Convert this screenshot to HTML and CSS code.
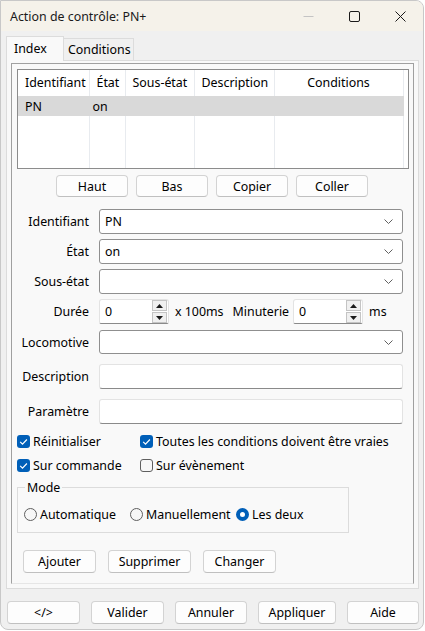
FILE: index.html
```html
<!DOCTYPE html>
<html lang="fr">
<head>
    <meta charset="UTF-8">
    <title>Action de contrôle: PN+</title>
    <link rel="stylesheet" href="styles.css">
</head>
<body>
    <div class="window">
        <!-- Title bar -->
        <div class="titlebar">
            <span class="title">Action de contrôle: PN+</span>
            <div class="caption">
                <div class="cap-btn">
                    <svg width="11" height="11" viewBox="0 0 11 11"><path d="M0.5 5.5h10" stroke="#c4c4c4" stroke-width="1"/></svg>
                </div>
                <div class="cap-btn">
                    <svg width="11" height="11" viewBox="0 0 11 11"><rect x="0.5" y="0.5" width="10" height="10" rx="1.5" fill="none" stroke="#1a1a1a" stroke-width="1"/></svg>
                </div>
                <div class="cap-btn">
                    <svg width="11" height="11" viewBox="0 0 11 11"><path d="M0.5 0.5l10 10M10.5 0.5l-10 10" stroke="#1a1a1a" stroke-width="1"/></svg>
                </div>
            </div>
        </div>

        <div class="client">
            <div class="tabs">
                <div class="tab active">Index</div>
                <div class="tab">Conditions</div>
            </div>

            <div class="panel">
                <div class="frame">
                    <!-- List of actions -->
                    <div class="listview">
                        <table>
                            <colgroup>
                                <col style="width:71px">
                                <col style="width:36px">
                                <col style="width:69px">
                                <col style="width:80px">
                                <col style="width:129px">
                                <col>
                            </colgroup>
                            <thead>
                                <tr>
                                    <th>Identifiant</th>
                                    <th>État</th>
                                    <th>Sous-état</th>
                                    <th>Description</th>
                                    <th class="center">Conditions</th>
                                    <th class="blank"></th>
                                </tr>
                            </thead>
                            <tbody>
                                <tr class="selected">
                                    <td class="first">PN</td>
                                    <td>on</td>
                                    <td></td>
                                    <td></td>
                                    <td></td>
                                    <td class="blank"></td>
                                </tr>
                                <tr class="filler">
                                    <td></td><td></td><td></td><td></td><td></td><td class="blank"></td>
                                </tr>
                            </tbody>
                        </table>
                    </div>

                    <div class="list-btns">
                        <button class="btn">Haut</button>
                        <button class="btn">Bas</button>
                        <button class="btn">Copier</button>
                        <button class="btn">Coller</button>
                    </div>

                    <!-- Fields -->
                    <div class="form">
                        <div class="row r-ident">
                            <label>Identifiant</label>
                            <div class="combo"><span>PN</span><svg class="chev" width="9" height="5" viewBox="0 0 9 5"><path d="M0.5 0.5l4 4 4-4" fill="none" stroke="#606060"/></svg></div>
                        </div>
                        <div class="row r-etat">
                            <label>État</label>
                            <div class="combo"><span>on</span><svg class="chev" width="9" height="5" viewBox="0 0 9 5"><path d="M0.5 0.5l4 4 4-4" fill="none" stroke="#606060"/></svg></div>
                        </div>
                        <div class="row r-sous">
                            <label>Sous-état</label>
                            <div class="combo"><span></span><svg class="chev" width="9" height="5" viewBox="0 0 9 5"><path d="M0.5 0.5l4 4 4-4" fill="none" stroke="#606060"/></svg></div>
                        </div>
                        <div class="row r-duree">
                            <label>Durée</label>
                            <div class="inline">
                                <div class="spin">
                                    <span class="spin-val">0</span>
                                    <div class="spin-btns">
                                        <div class="spin-btn"><svg width="7" height="4" viewBox="0 0 7 4"><path d="M0 4h7L3.5 0z" fill="#1a1a1a"/></svg></div>
                                        <div class="spin-btn"><svg width="7" height="4" viewBox="0 0 7 4"><path d="M0 0h7L3.5 4z" fill="#1a1a1a"/></svg></div>
                                    </div>
                                </div>
                                <span class="unit">x 100ms</span>
                                <span class="minut">Minuterie</span>
                                <div class="spin">
                                    <span class="spin-val">0</span>
                                    <div class="spin-btns">
                                        <div class="spin-btn"><svg width="7" height="4" viewBox="0 0 7 4"><path d="M0 4h7L3.5 0z" fill="#1a1a1a"/></svg></div>
                                        <div class="spin-btn"><svg width="7" height="4" viewBox="0 0 7 4"><path d="M0 0h7L3.5 4z" fill="#1a1a1a"/></svg></div>
                                    </div>
                                </div>
                                <span class="unit">ms</span>
                            </div>
                        </div>
                        <div class="row r-loco">
                            <label>Locomotive</label>
                            <div class="combo"><span></span><svg class="chev" width="9" height="5" viewBox="0 0 9 5"><path d="M0.5 0.5l4 4 4-4" fill="none" stroke="#606060"/></svg></div>
                        </div>
                        <div class="row r-desc">
                            <label>Description</label>
                            <div class="edit"></div>
                        </div>
                        <div class="row r-param">
                            <label>Paramètre</label>
                            <div class="edit"></div>
                        </div>
                    </div>

                    <!-- Options -->
                    <div class="checks">
                        <div class="check"><span class="box on"><svg width="13" height="13" viewBox="0 0 13 13"><path d="M3.2 6.8l2.3 2.3 4.4-4.6" fill="none" stroke="#fff" stroke-width="1.2"/></svg></span>Réinitialiser</div>
                        <div class="check"><span class="box on"><svg width="13" height="13" viewBox="0 0 13 13"><path d="M3.2 6.8l2.3 2.3 4.4-4.6" fill="none" stroke="#fff" stroke-width="1.2"/></svg></span>Toutes les conditions doivent être vraies</div>
                        <div class="check"><span class="box on"><svg width="13" height="13" viewBox="0 0 13 13"><path d="M3.2 6.8l2.3 2.3 4.4-4.6" fill="none" stroke="#fff" stroke-width="1.2"/></svg></span>Sur commande</div>
                        <div class="check"><span class="box"></span>Sur évènement</div>
                    </div>

                    <fieldset class="mode">
                        <legend>Mode</legend>
                        <div class="radios">
                            <div class="radio"><span class="dot"></span>Automatique</div>
                            <div class="radio"><span class="dot"></span>Manuellement</div>
                            <div class="radio"><span class="dot on"></span>Les deux</div>
                        </div>
                    </fieldset>

                    <div class="edit-btns">
                        <button class="btn w73">Ajouter</button>
                        <button class="btn w83">Supprimer</button>
                        <button class="btn w73">Changer</button>
                    </div>
                </div>
            </div>

            <!-- Dialog buttons -->
            <div class="footer">
                <button class="btn w73">&lt;/&gt;</button>
                <button class="btn w73">Valider</button>
                <button class="btn w72">Annuler</button>
                <button class="btn w78">Appliquer</button>
                <button class="btn w72">Aide</button>
            </div>
        </div>
    </div>
</body>
</html>
```

FILE: styles.css
```css
* {
    margin: 0;
    padding: 0;
    box-sizing: border-box;
}

body {
    font-family: 'Noto Sans', 'Open Sans', sans-serif;
    font-size: 12.4px;
    color: #000;
    background: #ffffff;
    width: 425px;
    height: 631px;
    overflow: hidden;
}

.window {
    width: 424px;
    height: 630px;
    background: #f0f0f0;
    border: 1px solid #c8c8c8;
    border-radius: 0 8px 8px 8px;
    display: flex;
    flex-direction: column;
    overflow: hidden;
}

/* Title bar */
.titlebar {
    height: 30px;
    flex: none;
    background: #f5f2ea;
    display: flex;
    align-items: center;
    padding-left: 9px;
}

.title {
    flex: 1;
    color: #1a1a1a;
}

.caption {
    display: flex;
}

.cap-btn {
    width: 46px;
    height: 30px;
    display: flex;
    align-items: center;
    justify-content: center;
}

/* Client area */
.client {
    flex: 1;
    display: flex;
    flex-direction: column;
    padding: 5px 0 0 5px;
}

.tabs {
    display: flex;
    align-items: flex-end;
    height: 24px;
    position: relative;
    z-index: 1;
}

.tab {
    height: 22px;
    border: 1px solid #dcdcdc;
    border-bottom: none;
    background: #f0f0f0;
    padding: 2px 0 0 4px;
    line-height: 18px;
    white-space: nowrap;
}

.tab.active {
    width: 58px;
    height: 25px;
    margin-bottom: -1px;
    background: #f9f9f9;
    padding: 3px 0 0 7px;
}

.tab + .tab {
    width: 70px;
    border-left: none;
}

.panel {
    width: 413px;
    height: 529px;
    border: 1px solid #dcdcdc;
    background: #f9f9f9;
    padding: 2px 4px 4px 4px;
    display: flex;
}

.frame {
    flex: 1;
    border: 1px solid #a0a0a0;
    border-bottom-color: #e6e6e6;
    padding: 5px 4px 0 5px;
}

/* List view */
.listview {
    height: 100px;
    border: 1px solid #8c8c8c;
    background: #fff;
    overflow: hidden;
}

.listview table {
    width: 100%;
    height: 100%;
    border-collapse: collapse;
    table-layout: fixed;
}

.listview th,
.listview td {
    text-align: left;
    font-weight: normal;
    white-space: nowrap;
    border-right: 1px solid #e8ebef;
    padding: 0 0 0 3px;
}

.listview th {
    height: 26px;
    padding: 0 0 2px 7px;
}

.listview th.center {
    text-align: center;
    padding-left: 0;
}

.listview .blank {
    border-right: none;
}

.listview tr.selected td {
    height: 20px;
    background: #d9d9d9;
    border-right-color: #d9d9d9;
}

.listview tr.selected td.blank {
    background: #fff;
}

.listview td.first {
    padding-left: 7px;
}

.list-btns {
    display: flex;
    gap: 8px;
    margin-top: 6px;
    padding-left: 39px;
}

/* Buttons */
.btn {
    width: 72px;
    height: 22px;
    font-family: inherit;
    font-size: 12.4px;
    color: #000;
    background: #fdfdfd;
    border: 1px solid #d3d3d3;
    border-bottom-color: #c0c0c0;
    border-radius: 4px;
}

.w72 { width: 72px; }
.w73 { width: 73px; }
.w78 { width: 78px; }
.w83 { width: 83px; }

/* Form rows */
.form {
    margin-top: 12px;
    display: flex;
    flex-direction: column;
}

.row {
    display: flex;
    align-items: center;
    height: 25px;
}

.row label {
    width: 72px;
    text-align: right;
    margin-right: 10px;
    white-space: nowrap;
}

.r-etat, .r-sous, .r-duree { margin-top: 5px; }
.r-loco { margin-top: 6px; height: 24px; }
.r-desc { margin-top: 10px; }
.r-param { margin-top: 10px; }

.combo {
    width: 304px;
    height: 100%;
    background: #fff;
    border: 1px solid #8f8f8f;
    border-radius: 3px;
    display: flex;
    align-items: center;
    padding: 0 9px 0 5px;
}

.combo span {
    flex: 1;
}

.edit {
    width: 304px;
    height: 100%;
    background: #fff;
    border: 1px solid #e3e3e3;
    border-bottom-color: #8a8a8a;
    border-radius: 3px;
}

.inline {
    display: flex;
    align-items: center;
    height: 100%;
    white-space: nowrap;
}

.spin {
    width: 70px;
    height: 100%;
    background: #fff;
    border: 1px solid #e3e3e3;
    border-bottom-color: #8a8a8a;
    border-radius: 3px 3px 2px 2px;
    display: flex;
    align-items: center;
    padding: 0 1px 0 5px;
}

.spin-val {
    flex: 1;
}

.spin-btns {
    display: flex;
    flex-direction: column;
    gap: 1px;
}

.spin-btn {
    width: 15px;
    height: 11px;
    background: #f0f0f0;
    border: 1px solid #c4c4c4;
    display: flex;
    align-items: center;
    justify-content: center;
}

.unit {
    margin-left: 6px;
}

.minut {
    margin: 0 4px 0 9px;
}

/* Check boxes */
.checks {
    display: grid;
    grid-template-columns: 123px 1fr;
    row-gap: 6px;
    margin-top: 8px;
    white-space: nowrap;
}

.check {
    display: flex;
    align-items: center;
    height: 18px;
}

.box {
    width: 13px;
    height: 13px;
    border: 1px solid #5f5f5f;
    border-radius: 3px;
    background: #f7f7f7;
    margin-right: 3px;
    display: flex;
}

.box.on {
    border: none;
    background: #005fb8;
}

/* Mode group */
.mode {
    width: 326px;
    height: 54px;
    margin-top: 5px;
    border: 1px solid #dcdcdc;
    padding: 0 6px;
}

.mode legend {
    padding: 0 2px;
    margin-left: 1px;
}

.radios {
    display: flex;
    margin-top: 10px;
    white-space: nowrap;
}

.radio {
    width: 106px;
    display: flex;
    align-items: center;
}

.dot {
    width: 13px;
    height: 13px;
    border: 1px solid #5f5f5f;
    border-radius: 50%;
    background: #f7f7f7;
    margin-right: 3px;
}

.dot.on {
    border: 4px solid #005fb8;
    background: #fff;
}

.edit-btns {
    display: flex;
    gap: 12px;
    margin-top: 17px;
    padding-left: 6px;
}

.edit-btns .btn {
    height: 23px;
}

/* Dialog buttons */
.footer {
    display: flex;
    gap: 11px;
    margin-top: 12px;
    padding-left: 1px;
}

.footer .btn {
    height: 23px;
}
```
